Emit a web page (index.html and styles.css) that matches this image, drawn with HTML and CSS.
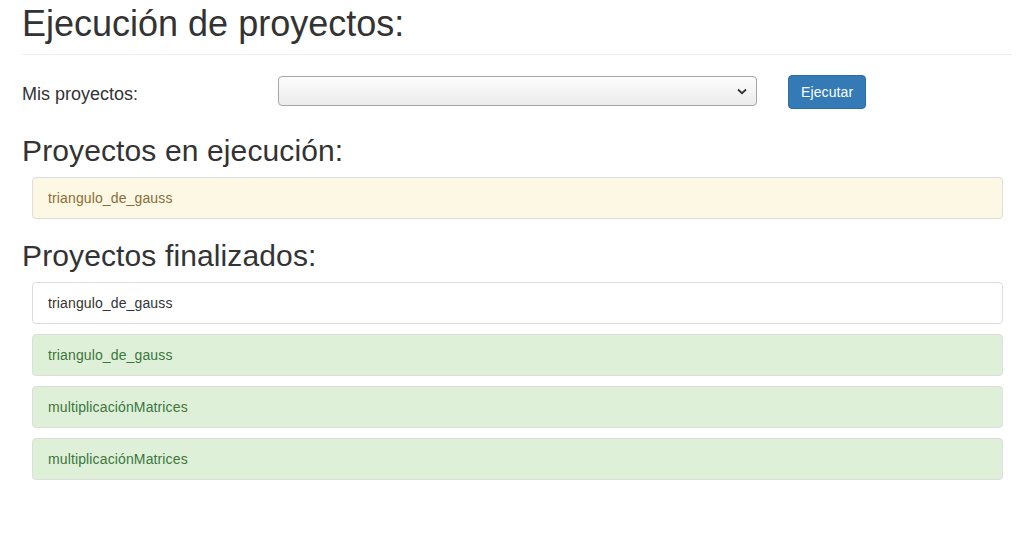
FILE: index.html
```html
<!DOCTYPE html>
<html lang="es">
<head>
<meta charset="utf-8">
<title>Ejecución de proyectos</title>
<link rel="stylesheet" href="styles.css">
</head>
<body>
<div class="container">
  <h1 class="page-header">Ejecución de proyectos:</h1>
  <div class="form-row">
    <label class="control-label" for="proyectos">Mis proyectos:</label>
    <div class="select-wrap">
      <select id="proyectos" class="form-select"><option></option></select>
      <svg class="chevron" width="10" height="7" viewBox="0 0 10 7"><path d="M1 1.5 L5 5.2 L9 1.5" fill="none" stroke="#333" stroke-width="1.8"/></svg>
    </div>
    <button class="btn-primary" type="button">Ejecutar</button>
  </div>
  <h2 class="section-title">Proyectos en ejecución:</h2>
  <div class="list-group">
    <div class="list-item item-warning">triangulo_de_gauss</div>
  </div>
  <h2 class="section-title">Proyectos finalizados:</h2>
  <div class="list-group">
    <div class="list-item">triangulo_de_gauss</div>
    <div class="list-item item-success">triangulo_de_gauss</div>
    <div class="list-item item-success">multiplicaciónMatrices</div>
    <div class="list-item item-success">multiplicaciónMatrices</div>
  </div>
</div>
</body>
</html>
```
FILE: styles.css
```css
* { box-sizing: border-box; }
html, body { margin: 0; padding: 0; background: #fff; }
body {
  font-family: "Liberation Sans", Arial, Helvetica, sans-serif;
  font-size: 14px;
  line-height: 20px;
  color: #333;
}
.container { padding: 0 22px; }
.page-header {
  font-size: 36px;
  font-weight: 500;
  line-height: 1.1;
  margin: 4px 0 20px;
  padding-bottom: 10px;
  border-bottom: 1px solid #eee;
}
.form-row {
  display: flex;
  align-items: flex-start;
  margin-bottom: 25px;
}
.control-label {
  width: 256px;
  flex: none;
  font-size: 18px;
  line-height: 25px;
  padding-top: 7px;
}
.select-wrap {
  position: relative;
  width: 479px;
  flex: none;
  margin-top: 1px;
}
.form-select {
  display: block;
  width: 100%;
  height: 30px;
  -webkit-appearance: none;
  appearance: none;
  border: 1px solid #a6a6a6;
  border-radius: 4px;
  background: linear-gradient(#fdfdfd, #ebebeb);
  font-family: inherit;
  font-size: 14px;
}
.chevron {
  position: absolute;
  right: 10px;
  top: 12px;
}
.btn-primary {
  margin-left: 31px;
  height: 34px;
  padding: 6px 12px;
  font-family: inherit;
  font-size: 14px;
  line-height: 20px;
  letter-spacing: 0.1px;
  color: #fff;
  background: #337ab7;
  border: 1px solid #2e6da4;
  border-radius: 4px;
}
.section-title {
  font-size: 30px;
  font-weight: 500;
  line-height: 1.1;
  letter-spacing: 0.12px;
  margin: 20px 0 10px;
}
.list-group {
  margin: 0 9px 20px 10px;
}
.list-item {
  padding: 10px 15px;
  border: 1px solid #ddd;
  border-radius: 4px;
  background: #fff;
  color: #333;
  letter-spacing: 0.13px;
  margin-bottom: 10px;
}
.list-item:last-child { margin-bottom: 0; }
.item-warning { background: #fcf8e3; color: #8a6d3b; }
.item-success { background: #dff0d8; color: #3c763d; }
```
